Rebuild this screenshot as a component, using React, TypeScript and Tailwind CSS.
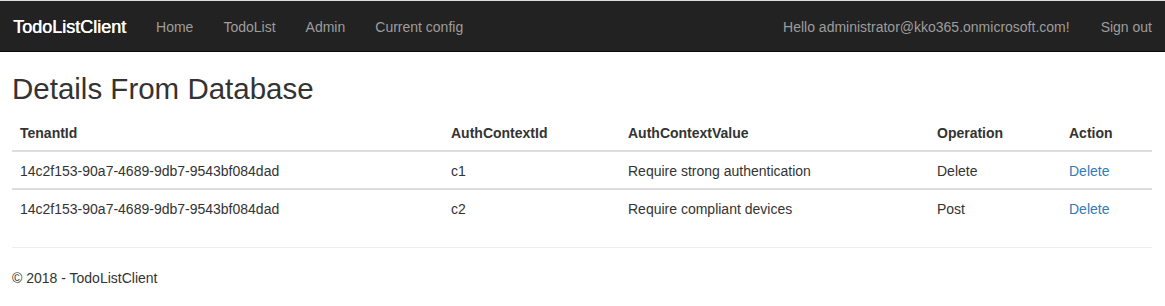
export default function App() {
  const rows = [
    {
      tenantId: "14c2f153-90a7-4689-9db7-9543bf084dad",
      authContextId: "c1",
      authContextValue: "Require strong authentication",
      operation: "Delete",
    },
    {
      tenantId: "14c2f153-90a7-4689-9db7-9543bf084dad",
      authContextId: "c2",
      authContextValue: "Require compliant devices",
      operation: "Post",
    },
  ];

  const cell = "px-[8px] pt-[9px] pb-[7px] leading-[20px]";

  return (
    <div className="min-h-[306px] bg-white border-t border-[#dcdcdc] font-['Liberation_Sans',Arial,sans-serif] text-[14px] text-[#333]">
      <nav className="flex h-[51px] items-center justify-between border-b border-[#080808] bg-[#222] pt-[3px]">
        <div className="flex items-center">
          <span className="pl-[13px] pr-[15px] text-[18px] text-white [text-shadow:0.4px_0_0_#fff]">TodoListClient</span>
          <a className="px-[15px] text-[#9d9d9d]">Home</a>
          <a className="px-[15px] text-[#9d9d9d]">TodoList</a>
          <a className="px-[15px] text-[#9d9d9d]">Admin</a>
          <a className="px-[15px] text-[#9d9d9d]">Current config</a>
        </div>
        <div className="flex items-center pr-[13px]">
          <span className="pr-[31px] text-[#9d9d9d]">Hello administrator@kko365.onmicrosoft.com!</span>
          <a className="text-[#9d9d9d]">Sign out</a>
        </div>
      </nav>

      <main className="pl-[12px] pr-[13px]">
        <h2 className="mt-[20px] mb-[9px] text-[29.5px] leading-[33px] font-normal">Details From Database</h2>
        <table className="w-full border-collapse text-left">
          <thead>
            <tr className="border-b-2 border-[#ddd]">
              <th className={`w-[431px] font-bold ${cell}`}>TenantId</th>
              <th className={`w-[177px] font-bold ${cell}`}>AuthContextId</th>
              <th className={`w-[309px] font-bold ${cell}`}>AuthContextValue</th>
              <th className={`w-[132px] font-bold ${cell}`}>Operation</th>
              <th className={`font-bold ${cell}`}>Action</th>
            </tr>
          </thead>
          <tbody>
            {rows.map((r, i) => (
              <tr key={i} className={i > 0 ? "border-t-2 border-[#ddd]" : ""}>
                <td className={cell}>{r.tenantId}</td>
                <td className={cell}>{r.authContextId}</td>
                <td className={cell}>{r.authContextValue}</td>
                <td className={cell}>{r.operation}</td>
                <td className={cell}>
                  <a className="text-[#337ab7]">Delete</a>
                </td>
              </tr>
            ))}
          </tbody>
        </table>
        <hr className="mt-[21px] mb-[20px] border-[#eee]" />
        <footer>
          <p className="leading-[20px]">© 2018 - TodoListClient</p>
        </footer>
      </main>
    </div>
  );
}
